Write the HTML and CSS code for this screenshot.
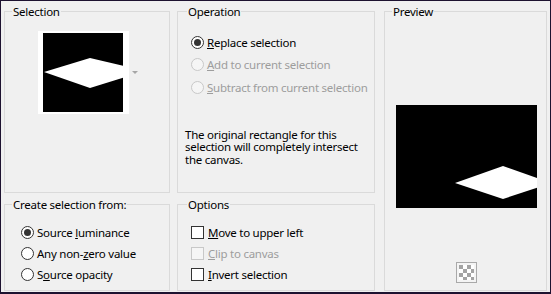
FILE: index.html
```html
<!DOCTYPE html>
<html>

<head>
    <meta charset="utf-8" />
    <title>Selection From Mask</title>
    <link rel="stylesheet" href="styles.css">
</head>

<body>
    <div class="dialog">
        <div class="main">
            <fieldset class="group group-sel">
                <legend>Selection</legend>
                <div class="thumb-row">
                    <div class="thumb">
                        <svg width="80" height="79" viewBox="0 0 80 79">
                            <rect width="80" height="79" fill="#000" />
                            <polygon points="1,39 47,25 102,38 47,55" fill="#fff" />
                        </svg>
                    </div>
                    <span class="drop-arrow"></span>
                </div>
            </fieldset>

            <fieldset class="group group-op">
                <legend>Operation</legend>
                <div class="choices">
                    <div class="choice"><span class="radio checked"></span><span><u>R</u>eplace selection</span></div>
                    <div class="choice disabled"><span class="radio"></span><span><u>A</u>dd to current selection</span></div>
                    <div class="choice disabled"><span class="radio"></span><span><u>S</u>ubtract from current selection</span></div>
                </div>
                <div class="note">
                    <span class="note-line">The original rectangle for this</span>
                    <span class="note-line">selection will completely intersect</span>
                    <span class="note-line">the canvas.</span>
                </div>
            </fieldset>

            <fieldset class="group group-src">
                <legend>Create selection from:</legend>
                <div class="choices small">
                    <div class="choice"><span class="radio checked"></span><span>Source <u>l</u>uminance</span></div>
                    <div class="choice"><span class="radio"></span><span>Any non-<u>z</u>ero value</span></div>
                    <div class="choice"><span class="radio"></span><span>S<u>o</u>urce opacity</span></div>
                </div>
            </fieldset>

            <fieldset class="group group-opts">
                <legend>Options</legend>
                <div class="choices small">
                    <div class="choice check"><span class="box"></span><span><u>M</u>ove to upper left</span></div>
                    <div class="choice check disabled"><span class="box"></span><span><u>C</u>lip to canvas</span></div>
                    <div class="choice check"><span class="box"></span><span><u>I</u>nvert selection</span></div>
                </div>
            </fieldset>
        </div>

        <fieldset class="group group-preview">
            <legend>Preview</legend>
            <div class="preview-body">
                <svg class="preview-img" width="141" height="103" viewBox="0 0 141 103">
                    <rect width="141" height="103" fill="#000" />
                    <polygon points="59,78 107,61 155,78 107,94" fill="#fff" />
                </svg>
                <svg class="checker" width="21" height="21" viewBox="0 0 21 21">
                    <rect x="0.5" y="0.5" width="20" height="20" fill="#f4f4f4" stroke="#a9a9a9" />
                    <rect x="3" y="3" width="15" height="15" fill="#fff" />
                    <rect x="3" y="3" width="4" height="4" fill="#a3a3a3" />
                    <rect x="11" y="3" width="4" height="4" fill="#a3a3a3" />
                    <rect x="7" y="7" width="4" height="4" fill="#a3a3a3" />
                    <rect x="15" y="7" width="3" height="4" fill="#a3a3a3" />
                    <rect x="3" y="11" width="4" height="4" fill="#a3a3a3" />
                    <rect x="11" y="11" width="4" height="4" fill="#a3a3a3" />
                    <rect x="7" y="15" width="4" height="3" fill="#a3a3a3" />
                    <rect x="15" y="15" width="3" height="3" fill="#a3a3a3" />
                </svg>
            </div>
        </fieldset>
    </div>
</body>

</html>
```

FILE: styles.css
```css
body {
    margin: 0;
    font-family: "Noto Sans", "Open Sans", sans-serif;
    font-size: 11.5px;
    letter-spacing: -0.25px;
    color: #000;
}

.dialog {
    display: flex;
    width: 551px;
    height: 294px;
    box-sizing: border-box;
    border: 1px solid #1d1230;
    border-bottom-width: 2px;
    padding: 2px 3px 1px 3px;
    background-color: #f0f0f0;
}

.main {
    display: grid;
    grid-template-columns: 166px 198px;
    grid-template-rows: 190px 95px;
    column-gap: 7px;
    row-gap: 3px;
}

.group {
    margin: 0;
    padding: 0;
    min-width: 0;
    border: 1px solid #dadada;
}

.group legend {
    margin-left: 7px;
    padding: 0 1px;
    line-height: 17px;
}

.group-op legend,
.group-opts legend {
    margin-left: 9px;
}

/* selection thumbnail */
.thumb-row {
    display: flex;
    align-items: center;
    margin: 11px 0 0 33px;
}

.thumb {
    display: flex;
    padding: 2px 6px 2px 5px;
    background-color: #fff;
}

.drop-arrow {
    width: 0;
    height: 0;
    margin-left: 3px;
    border-left: 3px solid transparent;
    border-right: 3px solid transparent;
    border-top: 3px solid #a6a6a6;
}

/* radio and check rows */
.choices {
    padding: 11px 0 0 13px;
}

.choices.small {
    padding-top: 8.5px;
}

.group-src .choices {
    padding-left: 16px;
}

.choice {
    display: flex;
    align-items: center;
    gap: 3px;
    height: 22.5px;
}

.choices.small .choice {
    height: 21px;
}

.choice.check {
    gap: 4px;
}

.choice u {
    text-underline-offset: 1px;
}

.radio {
    display: flex;
    align-items: center;
    justify-content: center;
    width: 13px;
    height: 13px;
    box-sizing: border-box;
    border: 1px solid #333;
    border-radius: 50%;
    background-color: #fff;
}

.radio.checked::after {
    content: "";
    width: 7px;
    height: 7px;
    border-radius: 50%;
    background-color: #333;
}

.box {
    width: 13px;
    height: 13px;
    box-sizing: border-box;
    border: 1px solid #333;
    background-color: #fff;
}

.disabled {
    color: #9d9d9d;
}

.disabled .radio,
.disabled .box {
    border-color: #c8c8c8;
    background-color: #f5f5f5;
}

.note {
    margin: 30px 0 0 7px;
}

.note-line {
    display: block;
    height: 12.5px;
    line-height: 12.5px;
    white-space: nowrap;
}

/* preview */
.group-preview {
    flex: 1;
    margin-left: 9px;
}

.preview-body {
    display: flex;
    flex-direction: column;
    align-items: center;
    padding-left: 2px;
}

.preview-img {
    margin-top: 85px;
}

.checker {
    margin-top: 54px;
}
```
